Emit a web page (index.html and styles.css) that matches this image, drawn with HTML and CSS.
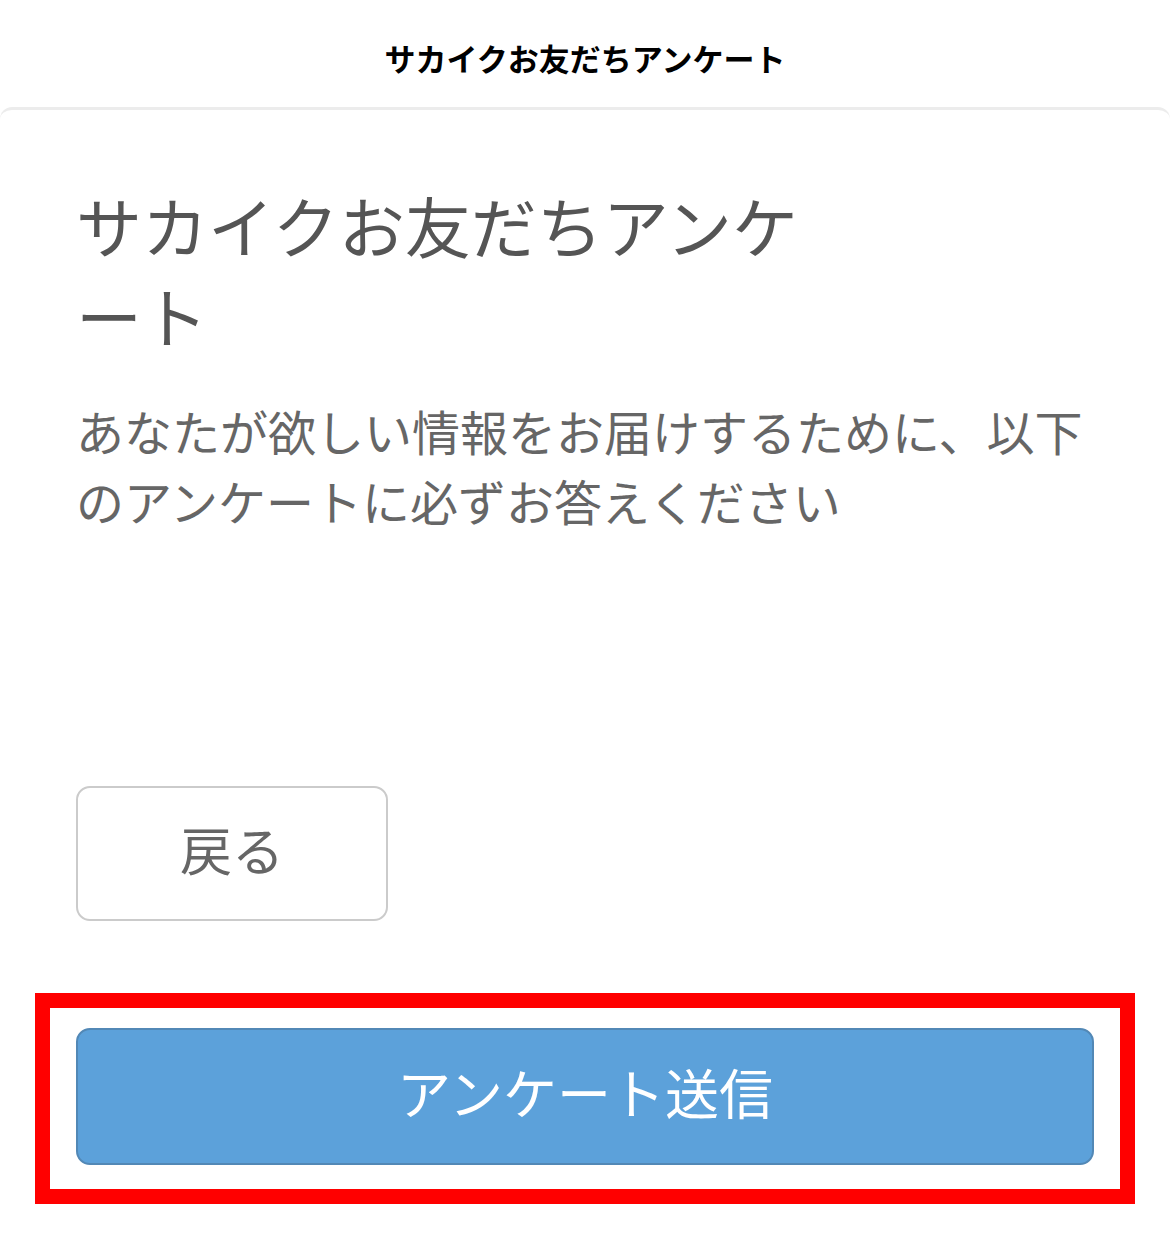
FILE: index.html
```html
<!DOCTYPE html>
<html lang="ja">
<head>
    <meta charset="UTF-8">
    <meta name="viewport" content="width=device-width, initial-scale=1.0">
    <title>サカイクお友だちアンケート</title>
    <link rel="stylesheet" href="styles.css">
</head>
<body>
    <header class="top-bar">
        <div class="top-title">サカイクお友だちアンケート</div>
    </header>

    <main class="card">
        <h1 class="survey-title">サカイクお友だちアンケート</h1>
        <p class="survey-lead">あなたが欲しい情報をお届けするために、以下のアンケートに必ずお答えください</p>

        <button class="btn-back" type="button">戻る</button>

        <div class="submit-mark">
            <button class="btn-submit" type="submit">アンケート送信</button>
        </div>
    </main>
</body>
</html>
```

FILE: styles.css
```css
/* General */
* {
    margin: 0;
    padding: 0;
    box-sizing: border-box;
}

body {
    background: #fff;
    color: #555;
    font-family: "Noto Sans CJK JP", "Noto Sans", sans-serif;
}

/* Header */
.top-bar {
    height: 107px;
    padding-top: 8px;
    display: flex;
    align-items: center;
    justify-content: center;
}

.top-title {
    font-size: 31px;
    font-weight: bold;
    color: #000;
    line-height: 1;
}

/* Card */
.card {
    border-top: 3px solid #ececec;
    border-radius: 12px 12px 0 0;
    padding: 0 60px 0 76px;
    min-height: 1129px;
}

.survey-title {
    max-width: 760px;
    margin-top: 69px;
    font-size: 66px;
    font-weight: normal;
    line-height: 90px;
    color: #555;
}

.survey-lead {
    margin-top: 36px;
    font-size: 48px;
    line-height: 70px;
    color: #666;
}

.btn-back {
    display: block;
    width: 312px;
    height: 135px;
    margin-top: 251px;
    padding-bottom: 10px;
    border: 2px solid #cbcbcb;
    border-radius: 14px;
    background: #fff;
    color: #666;
    font-family: inherit;
    font-size: 52px;
}

/* red highlight round the submit button */
.submit-mark {
    width: 1100px;
    margin: 72px 0 0 -41px;
    padding: 20px 26px 24px;
    border: 15px solid #ff0000;
}

.btn-submit {
    display: block;
    width: 100%;
    height: 137px;
    padding-bottom: 10px;
    border: 2px solid #5288b6;
    border-radius: 14px;
    background: #5ca1da;
    color: #fff;
    font-family: inherit;
    font-size: 54px;
}
```
